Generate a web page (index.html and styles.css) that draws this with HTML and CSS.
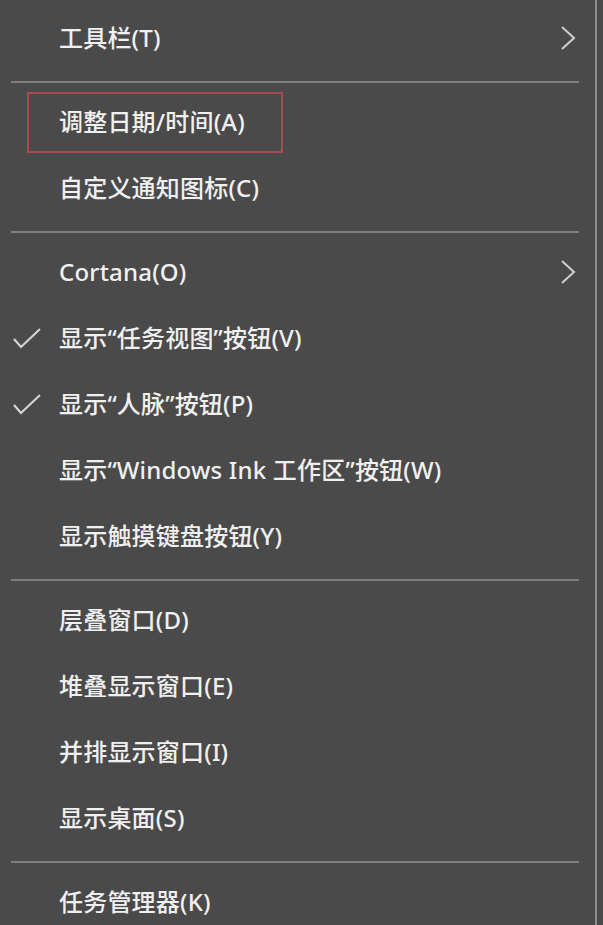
FILE: index.html
```html
<!DOCTYPE html>
<html lang="zh-CN">
<head>
<meta charset="utf-8">
<link rel="stylesheet" href="styles.css">
</head>
<body>
<div class="menu">
  <div class="item">
    <span class="check"></span><span class="label">工具栏(T)</span>
    <svg class="chev" viewBox="0 0 16 26"><path d="M2 2 L14 13 L2 24" /></svg>
  </div>
  <div class="sep"></div>
  <div class="item">
    <span class="check"></span><span class="label">调整日期/时间(A)</span>
    <span class="mark"></span>
  </div>
  <div class="item">
    <span class="check"></span><span class="label">自定义通知图标(C)</span>
  </div>
  <div class="sep"></div>
  <div class="item">
    <span class="check"></span><span class="label">Cortana(O)</span>
    <svg class="chev" viewBox="0 0 16 26"><path d="M2 2 L14 13 L2 24" /></svg>
  </div>
  <div class="item">
    <span class="check"><svg viewBox="0 0 28 22"><path d="M1 11 L8 19 L27 1" /></svg></span><span class="label">显示“任务视图”按钮(V)</span>
  </div>
  <div class="item">
    <span class="check"><svg viewBox="0 0 28 22"><path d="M1 11 L8 19 L27 1" /></svg></span><span class="label">显示“人脉”按钮(P)</span>
  </div>
  <div class="item">
    <span class="check"></span><span class="label">显示“Windows Ink 工作区”按钮(W)</span>
  </div>
  <div class="item">
    <span class="check"></span><span class="label">显示触摸键盘按钮(Y)</span>
  </div>
  <div class="sep"></div>
  <div class="item">
    <span class="check"></span><span class="label">层叠窗口(D)</span>
  </div>
  <div class="item">
    <span class="check"></span><span class="label">堆叠显示窗口(E)</span>
  </div>
  <div class="item">
    <span class="check"></span><span class="label">并排显示窗口(I)</span>
  </div>
  <div class="item">
    <span class="check"></span><span class="label">显示桌面(S)</span>
  </div>
  <div class="sep"></div>
  <div class="item">
    <span class="check"></span><span class="label">任务管理器(K)</span>
  </div>
</div>
</body>
</html>
```
FILE: styles.css
```css
html, body {
  margin: 0;
  padding: 0;
  background: #4a4a4a;
  height: 100%;
  overflow: hidden;
}
.menu {
  width: 597px;
  height: 925px;
  box-sizing: border-box;
  padding-top: 7px;
  border-right: 2px solid #8c8c8c;
  background: #4a4a4a;
  display: flex;
  flex-direction: column;
  font-family: "Noto Sans", "Noto Sans CJK SC", sans-serif;
  color: #f0f0f0;
  font-size: 24px;
  font-weight: 500;
  letter-spacing: 0.2px;
}
.item {
  position: relative;
  height: 66px;
  box-sizing: border-box;
  padding-bottom: 5px;
  display: flex;
  align-items: center;
  flex-shrink: 0;
}
.check {
  width: 59px;
  flex-shrink: 0;
  display: flex;
  align-items: center;
  padding-left: 13px;
  padding-top: 3px;
  box-sizing: border-box;
}
.check svg {
  width: 28px;
  height: 22px;
  fill: none;
  stroke: #d4d4d4;
  stroke-width: 2.2;
}
.label {
  white-space: nowrap;
  line-height: 1;
}
.chev {
  margin-left: auto;
  margin-right: 19px;
  width: 16px;
  height: 26px;
  fill: none;
  stroke: #cfcfcf;
  stroke-width: 2;
}
.sep {
  height: 18px;
  display: flex;
  align-items: center;
  flex-shrink: 0;
  padding: 0 16px 0 11px;
}
.sep::before {
  content: "";
  display: block;
  flex: 1;
  height: 2px;
  background: #7e7e7e;
}
.mark {
  position: absolute;
  left: 27px;
  top: 1px;
  width: 256px;
  height: 61px;
  box-sizing: border-box;
  border: 2px solid #a94a4c;
}
```
